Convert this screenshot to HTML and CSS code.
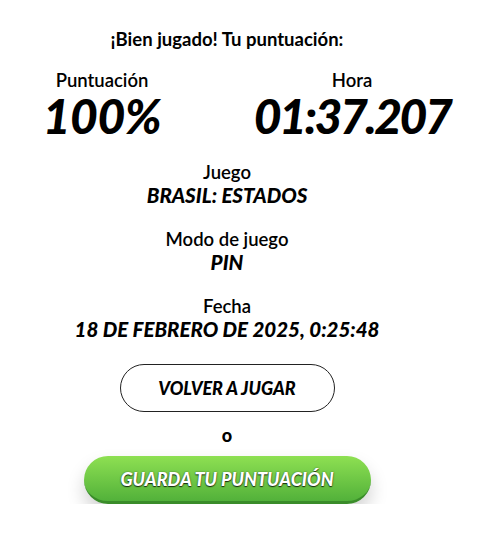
FILE: index.html
```html
<!DOCTYPE html>
<html lang="es">
<head>
<meta charset="utf-8">
<title>Resultado</title>
<link rel="stylesheet" href="styles.css">
</head>
<body>
<div class="result">
    <div class="title">¡Bien jugado! Tu puntuación:</div>
    <div class="stats">
        <div class="stat">
            <div class="label">Puntuación</div>
            <div class="big">100%</div>
        </div>
        <div class="stat">
            <div class="label">Hora</div>
            <div class="big time">01:37.207</div>
        </div>
    </div>
    <div class="info">
        <div class="label">Juego</div>
        <div class="value">BRASIL: ESTADOS</div>
    </div>
    <div class="info">
        <div class="label">Modo de juego</div>
        <div class="value">PIN</div>
    </div>
    <div class="info">
        <div class="label">Fecha</div>
        <div class="value">18 DE FEBRERO DE 2025, 0:25:48</div>
    </div>
    <a class="btn-again" href="javascript:;">VOLVER A JUGAR</a>
    <div class="or">o</div>
    <a class="btn-save" href="javascript:;">GUARDA TU PUNTUACIÓN</a>
</div>
</body>
</html>
```

FILE: styles.css
```css
body{margin:0;padding:0;background:#FFF;color:#000;font-family:Lato,"Noto Sans",sans-serif;}
a{text-decoration:none;}
.result{width:454px;display:flex;flex-direction:column;align-items:center;text-align:center;padding-top:27px;}
.title{font-size:18.5px;font-weight:700;line-height:24px;}
.stats{display:grid;grid-template-columns:200px 200px;column-gap:50px;margin-top:18px;}
.label{font-size:18.5px;font-weight:600;line-height:22px;}
.big{font-size:48px;font-weight:900;font-style:italic;line-height:50px;letter-spacing:-0.5px;}
.big.time{letter-spacing:-2.5px;}
.info{margin-top:21px;}
.stats + .info{margin-top:20px;}
.value{font-size:20.5px;font-weight:900;font-style:italic;line-height:24px;}
.btn-again{display:flex;align-items:center;justify-content:center;width:213px;height:46px;margin-top:23px;border:1px solid #222;border-radius:24px;color:#000;font-size:18px;font-weight:900;font-style:italic;}
.or{font-size:18px;font-weight:900;line-height:20px;margin-top:13px;}
.btn-save{display:flex;align-items:center;justify-content:center;width:287px;height:45px;margin-top:11px;border-radius:24px;border-bottom:3px solid #3A8C2A;background:linear-gradient(#8EE052,#52B13A);color:#FFF;font-size:18px;font-weight:900;font-style:italic;text-shadow:0 1px 1px rgba(0,0,0,.75),0 0 2px rgba(0,0,0,.45);box-shadow:0 10px 18px rgba(0,0,0,.18);}
```
